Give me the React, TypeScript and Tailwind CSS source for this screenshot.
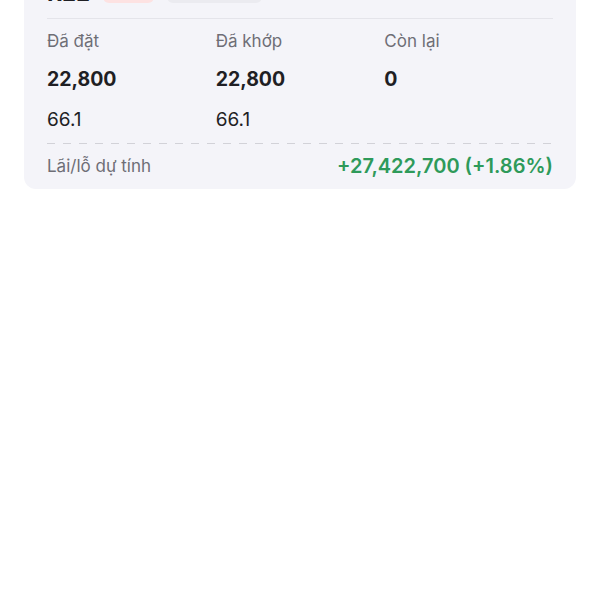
export default function App() {
  return (
    <div className="min-h-[600px] w-[600px] bg-white" style={{ fontFamily: "Inter, 'Noto Sans', sans-serif" }}>
      <div className="mx-[24px] -mt-[31px] rounded-[12px] bg-[#f4f4f9] px-[23px] pt-[8px] pb-[11px]">
        <div className="flex h-[28px] items-center gap-[13px]">
          <span className="translate-y-[2px] text-[23px] leading-[28px] font-bold text-[#1f1f24]">REE</span>
          <span className="h-[24px] w-[51px] rounded-[6px] bg-[#fde2e2]" />
          <span className="flex h-[24px] w-[95px] items-center justify-end rounded-[6px] bg-[#ebebf0] pr-[14px]">
            <span className="h-[6px] w-[2px] bg-[#555]" />
          </span>
        </div>
        <div className="mt-[13px] border-t border-[#e4e4ea]" />
        <div className="mt-[10px] grid grid-cols-3 text-[#1f1f24]">
          <div className="flex flex-col">
            <span className="text-[17px] leading-[24px] text-[#6e6e76]">Đã đặt</span>
            <span className="mt-[12px] text-[19.5px] leading-[28px] font-bold">22,800</span>
            <span className="mt-[14px] text-[19px] leading-[26px]">66.1</span>
          </div>
          <div className="flex flex-col">
            <span className="text-[17px] leading-[24px] text-[#6e6e76]">Đã khớp</span>
            <span className="mt-[12px] text-[19.5px] leading-[28px] font-bold">22,800</span>
            <span className="mt-[14px] text-[19px] leading-[26px]">66.1</span>
          </div>
          <div className="flex flex-col">
            <span className="text-[17px] leading-[24px] text-[#6e6e76]">Còn lại</span>
            <span className="mt-[12px] text-[19.5px] leading-[28px] font-bold">0</span>
          </div>
        </div>
        <div className="mt-[10px] h-px bg-[repeating-linear-gradient(to_right,#d2d2d8_0_8px,transparent_8px_16px)]" />
        <div className="mt-[10px] flex items-center justify-between">
          <span className="text-[17px] leading-[24px] text-[#6e6e76]">Lãi/lỗ dự tính</span>
          <span className="text-[20px] leading-[24px] font-semibold text-[#2e9a5a]">+27,422,700 (+1.86%)</span>
        </div>
      </div>
    </div>
  );
}
